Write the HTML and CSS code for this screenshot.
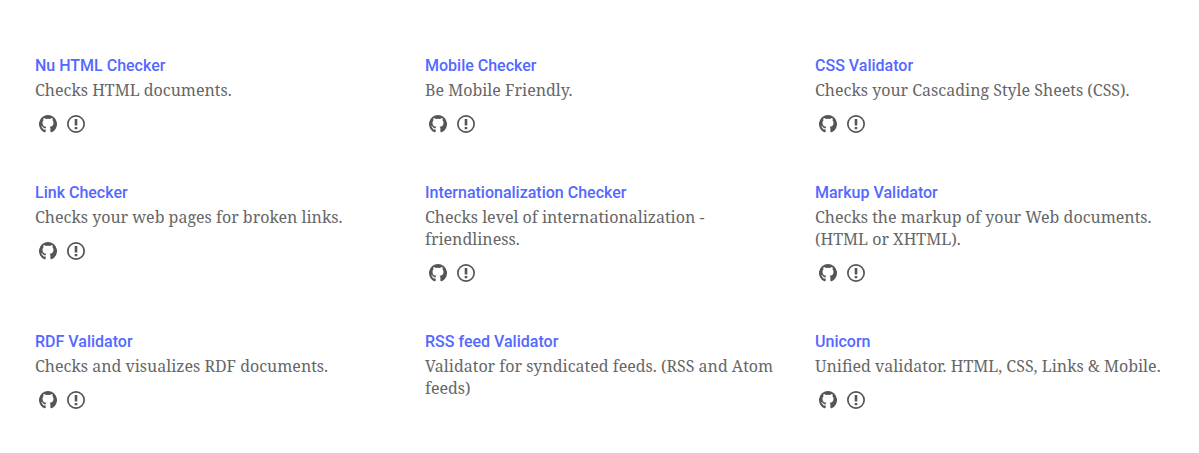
FILE: index.html
```
<!DOCTYPE html>
<html lang="en">
<head>
    <meta charset="UTF-8">
    <meta name="viewport" content="width=device-width, initial-scale=1.0">
    <title>Validators</title>
    <link rel="stylesheet" href="styles.css">
</head>
<body>

<svg class="sprite" aria-hidden="true">
  <symbol id="github" viewBox="0 0 18 18">
    <path d="M9 0a9 9 0 0 0-3.6 17.25c.7.25 1.3-.05 1.3-.65v-2.2c-2.1.45-2.9-.4-3.3-1.45-.2-.5-.6-.9-1-1.2-.3-.2-.2-.4.2-.4.8 0 1.3.6 1.7 1.2.6.95 1.5.95 2.4.6.1-.6.35-1 .7-1.3C4.9 11.6 3.5 10.7 3.5 7.8c0-1 .3-1.8.9-2.4-.1-.7-.1-1.5.2-2.3.9 0 1.7.4 2.4.9a8 8 0 0 1 4 0c.7-.5 1.5-.9 2.4-.9.3.8.3 1.6.2 2.3.6.6.9 1.4.9 2.4 0 2.900-1.400 3.800-3.900 4.050.5.4.8 1 .8 1.900v2.850c0 .6.5.9 1.200.65A9 9 0 0 0 9 0z"/>
  </symbol>
  <symbol id="issue" viewBox="0 0 18 18">
    <path fill-rule="evenodd" d="M9 0a9 9 0 1 0 0 18A9 9 0 0 0 9 0zm0 1.700a7.300 7.300 0 1 1 0 14.600A7.300 7.300 0 0 1 9 1.700zM7.700 4h2.600v6.500H7.700zM7.700 12h2.600v2.200H7.700z"/>
  </symbol>
</svg>

<main class="tools">
  <section class="tool">
    <h2><a href="#">Nu HTML Checker</a></h2>
    <p>Checks HTML documents.</p>
    <div class="links">
      <a href="#" aria-label="GitHub"><svg><use href="#github"/></svg></a>
      <a href="#" aria-label="Issues"><svg><use href="#issue"/></svg></a>
    </div>
  </section>
  <section class="tool">
    <h2><a href="#">Mobile Checker</a></h2>
    <p>Be Mobile Friendly.</p>
    <div class="links">
      <a href="#" aria-label="GitHub"><svg><use href="#github"/></svg></a>
      <a href="#" aria-label="Issues"><svg><use href="#issue"/></svg></a>
    </div>
  </section>
  <section class="tool">
    <h2><a href="#">CSS Validator</a></h2>
    <p>Checks your Cascading Style Sheets (CSS).</p>
    <div class="links">
      <a href="#" aria-label="GitHub"><svg><use href="#github"/></svg></a>
      <a href="#" aria-label="Issues"><svg><use href="#issue"/></svg></a>
    </div>
  </section>
  <section class="tool">
    <h2><a href="#">Link Checker</a></h2>
    <p>Checks your web pages for broken links.</p>
    <div class="links">
      <a href="#" aria-label="GitHub"><svg><use href="#github"/></svg></a>
      <a href="#" aria-label="Issues"><svg><use href="#issue"/></svg></a>
    </div>
  </section>
  <section class="tool">
    <h2><a href="#">Internationalization Checker</a></h2>
    <p>Checks level of internationalization -<br>friendliness.</p>
    <div class="links">
      <a href="#" aria-label="GitHub"><svg><use href="#github"/></svg></a>
      <a href="#" aria-label="Issues"><svg><use href="#issue"/></svg></a>
    </div>
  </section>
  <section class="tool">
    <h2><a href="#">Markup Validator</a></h2>
    <p>Checks the markup of your Web documents. (HTML or XHTML).</p>
    <div class="links">
      <a href="#" aria-label="GitHub"><svg><use href="#github"/></svg></a>
      <a href="#" aria-label="Issues"><svg><use href="#issue"/></svg></a>
    </div>
  </section>
  <section class="tool">
    <h2><a href="#">RDF Validator</a></h2>
    <p>Checks and visualizes RDF documents.</p>
    <div class="links">
      <a href="#" aria-label="GitHub"><svg><use href="#github"/></svg></a>
      <a href="#" aria-label="Issues"><svg><use href="#issue"/></svg></a>
    </div>
  </section>
  <section class="tool">
    <h2><a href="#">RSS feed Validator</a></h2>
    <p>Validator for syndicated feeds. (RSS and Atom feeds)</p>
  </section>
  <section class="tool">
    <h2><a href="#">Unicorn</a></h2>
    <p>Unified validator. HTML, CSS, Links &amp; Mobile.</p>
    <div class="links">
      <a href="#" aria-label="GitHub"><svg><use href="#github"/></svg></a>
      <a href="#" aria-label="Issues"><svg><use href="#issue"/></svg></a>
    </div>
  </section>
</main>

</body>
</html>
```
FILE: styles.css
```
body {
  margin: 0;
  background: #fff;
  color: #666;
  font-family: "Roboto Slab", "Noto Serif", "DejaVu Serif", "Liberation Serif", serif;
  font-size: 16px;
  line-height: 22px;
}

.sprite {
  display: none;
}

.tools {
  display: grid;
  grid-template-columns: repeat(3, 1fr);
  column-gap: 30px;
  row-gap: 49px;
  padding: 55px 24px 40px 35px;
}

.tool h2 {
  margin: 0 0 2px;
  font-family: Roboto, sans-serif;
  font-size: 16px;
  font-weight: 500;
}

.tool h2 a {
  color: #5468ff;
  text-decoration: none;
}

.tool p {
  margin: 0;
}

.links {
  display: flex;
  gap: 10px;
  margin-top: 14px;
  padding-left: 4px;
}

.links a {
  color: #555;
}

.links svg {
  display: block;
  width: 18px;
  height: 18px;
  fill: currentColor;
}
```
